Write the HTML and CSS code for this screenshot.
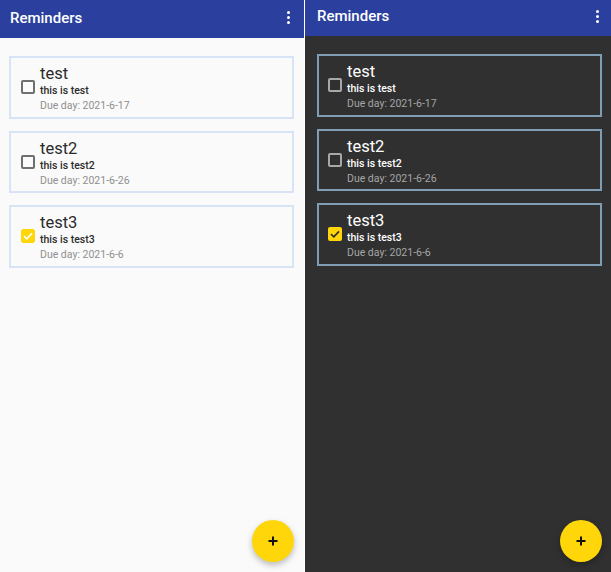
FILE: index.html
```html
<!DOCTYPE html>
<html lang="en">
  <head>
    <meta charset="UTF-8" />
    <meta name="viewport" content="width=device-width, initial-scale=1.0" />

    <title>Reminders</title>

    <link rel="stylesheet" href="styles.css">
  </head>
  <body>
    <!-- Light theme -->
    <section class="screen light">
      <header class="app-bar">
        <h1>Reminders</h1>
        <div class="menu"><span></span><span></span><span></span></div>
      </header>

      <ul class="list">
        <li class="card">
          <span class="check"></span>
          <div class="text">
            <h2>test</h2>
            <p class="desc">this is test</p>
            <p class="due">Due day: 2021-6-17</p>
          </div>
        </li>
        <li class="card">
          <span class="check"></span>
          <div class="text">
            <h2>test2</h2>
            <p class="desc">this is test2</p>
            <p class="due">Due day: 2021-6-26</p>
          </div>
        </li>
        <li class="card">
          <span class="check checked">
            <svg viewBox="0 0 14 14"><path d="M3 7.2l2.8 2.6L11 4.4" /></svg>
          </span>
          <div class="text">
            <h2>test3</h2>
            <p class="desc">this is test3</p>
            <p class="due">Due day: 2021-6-6</p>
          </div>
        </li>
      </ul>

      <button class="fab" type="button">
        <svg viewBox="0 0 12 12"><path d="M6 1.5v9M1.5 6h9" /></svg>
      </button>
    </section>

    <!-- Dark theme -->
    <section class="screen dark">
      <header class="app-bar">
        <h1>Reminders</h1>
        <div class="menu"><span></span><span></span><span></span></div>
      </header>

      <ul class="list">
        <li class="card">
          <span class="check"></span>
          <div class="text">
            <h2>test</h2>
            <p class="desc">this is test</p>
            <p class="due">Due day: 2021-6-17</p>
          </div>
        </li>
        <li class="card">
          <span class="check"></span>
          <div class="text">
            <h2>test2</h2>
            <p class="desc">this is test2</p>
            <p class="due">Due day: 2021-6-26</p>
          </div>
        </li>
        <li class="card">
          <span class="check checked">
            <svg viewBox="0 0 14 14"><path d="M3 7.2l2.8 2.6L11 4.4" /></svg>
          </span>
          <div class="text">
            <h2>test3</h2>
            <p class="desc">this is test3</p>
            <p class="due">Due day: 2021-6-6</p>
          </div>
        </li>
      </ul>

      <button class="fab" type="button">
        <svg viewBox="0 0 12 12"><path d="M6 1.5v9M1.5 6h9" /></svg>
      </button>
    </section>
  </body>
</html>
```

FILE: styles.css
```css
html,
body {
  height: 100%;
}
body {
  margin: 0;
  display: flex;
  overflow: hidden;
  background-color: #ffffff;
  font-family: Roboto, "Liberation Sans", sans-serif;
}

.screen {
  position: relative;
  height: 572px;
  box-sizing: border-box;
}
.light {
  width: 304px;
  background-color: #fafafa;
  color: #2b2b2b;
  --bar-height: 38px;
  --list-top: 18px;
  --border: #d6e4f5;
  --box: #6f6f6f;
  --muted: #8f8f8f;
}
.dark {
  width: 306px;
  margin-left: 1px;
  background-color: #303030;
  color: #ffffff;
  --bar-height: 36px;
  --list-top: 18px;
  --border: #7f9db3;
  --box: #a8a8a8;
  --muted: #a6a6a6;
}

.app-bar {
  height: var(--bar-height);
  box-sizing: border-box;
  padding: 0 14px 3px 10px;
  display: flex;
  align-items: center;
  justify-content: space-between;
  background-color: #2b3f9e;
  color: #ffffff;
}
.dark .app-bar {
  padding-left: 12px;
  padding-right: 12px;
  padding-bottom: 4px;
}
.app-bar h1 {
  margin: 0;
  font-size: 15px;
  font-weight: 500;
}
.menu {
  display: flex;
  flex-direction: column;
  gap: 2px;
}
.menu span {
  width: 3px;
  height: 3px;
  border-radius: 50%;
  background-color: #ffffff;
}

.list {
  list-style: none;
  margin: 0;
  padding: var(--list-top) 10px 0 9px;
  display: flex;
  flex-direction: column;
  gap: 12px;
}
.dark .list {
  padding-left: 12px;
  padding-right: 9px;
}

.card {
  height: 62.5px;
  box-sizing: border-box;
  border: 2px solid var(--border);
  padding-left: 10px;
  display: flex;
  align-items: center;
  gap: 5px;
}
.dark .card {
  padding-left: 9px;
}

.check {
  width: 14px;
  height: 14px;
  flex: none;
  box-sizing: border-box;
  border: 2px solid var(--box);
  border-radius: 2px;
}
.check svg {
  display: block;
  width: 14px;
  height: 14px;
  margin: -2px;
  fill: none;
  stroke: #ffffff;
  stroke-width: 1.6;
}
.checked {
  border-color: #ffd60a;
  background-color: #ffd60a;
}
.dark .checked svg {
  stroke: #2b2b2b;
}

.text {
  padding-top: 4px;
}
.text h2 {
  margin: 0;
  font-size: 16.5px;
  font-weight: 400;
  line-height: 20px;
}
.text p {
  margin: 0;
}
.desc {
  font-size: 10.5px;
  font-weight: 500;
  line-height: 14px;
}
.due {
  font-size: 10.5px;
  line-height: 16px;
  color: var(--muted);
}

.fab {
  position: absolute;
  right: 10px;
  bottom: 10px;
  width: 42px;
  height: 42px;
  padding: 0;
  border: none;
  border-radius: 50%;
  background-color: #ffd60a;
  box-shadow: 0 3px 6px rgba(0, 0, 0, 0.25);
  display: flex;
  align-items: center;
  justify-content: center;
}
.dark .fab {
  right: 9px;
}
.fab svg {
  width: 12px;
  height: 12px;
  fill: none;
  stroke: #111111;
  stroke-width: 2;
}
```
